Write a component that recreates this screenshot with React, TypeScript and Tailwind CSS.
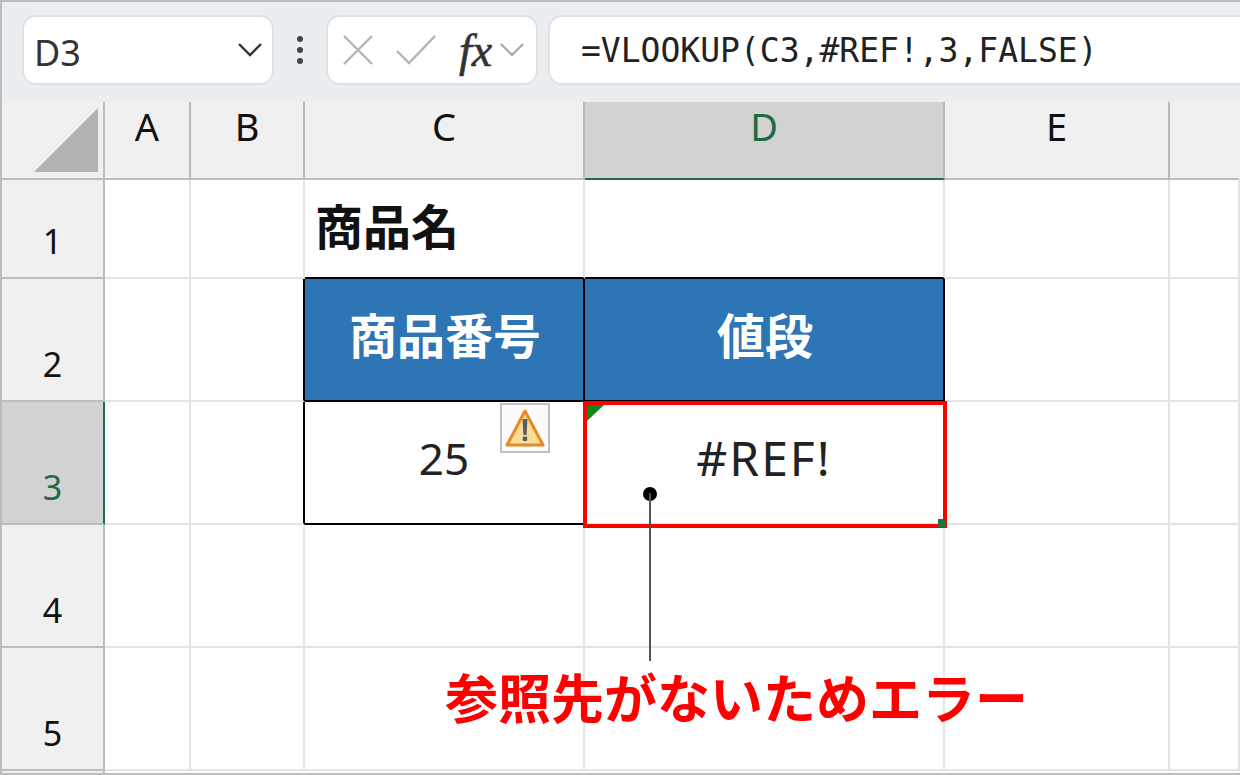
import React from 'react';

const headerFont = "font-['Noto_Sans','Noto_Sans_CJK_JP',sans-serif]";

const columns = [
  { label: 'A', line: 'border-[#b9b9b9]' },
  { label: 'B', line: 'border-[#b9b9b9]' },
  { label: 'C', line: 'border-[#b9b9b9]' },
  { label: 'D', line: 'border-[#b9b9b9]', active: true },
  { label: 'E', line: 'border-[#b9b9b9]' },
  { label: '', line: 'border-transparent' },
];

const Cell: React.FC<{ className?: string; children?: React.ReactNode }> = ({ className = '', children }) => (
  <div className={`flex items-center justify-center border-r-2 border-b-2 border-[#e4e4e4] ${className}`}>{children}</div>
);

const RowHead: React.FC<{ n: number; active?: boolean }> = ({ n, active }) => (
  <div
    className={`flex items-end justify-center pb-[14px] border-b-2 border-r-2 text-[34px] leading-[44px] ${
      active ? 'bg-[#d2d2d2] text-[#1e6b41] border-r-[#1e7145] border-b-[#bdbdbd]' : 'bg-[#f0f0f0] text-[#111] border-[#bdbdbd]'
    }`}
  >
    {n}
  </div>
);

const Warning = () => (
  <div className="absolute left-[195px] top-[1px] w-[50px] h-[50px] border-2 border-[#c0c0c0] bg-[#fbfbfb] flex items-center justify-center">
    <svg width="42" height="42" viewBox="0 0 42 42">
      <path d="M21 4 L39 38 H3 Z" fill="#f9dc95" stroke="#e68a26" strokeWidth="3" strokeLinejoin="round" />
      <path d="M18.6 12 H23.4 L22.6 28 H19.4 Z" fill="#5c5c5c" />
      <rect x="18.8" y="29.5" width="4.4" height="4.4" rx="1" fill="#5c5c5c" />
    </svg>
  </div>
);

const App: React.FC = () => {
  return (
    <div className={`relative w-[1240px] h-[775px] overflow-hidden bg-white border-2 border-r-0 border-[#bcbcbc] ${headerFont}`}>
      {/* formula bar */}
      <div className="h-[100px] bg-[#ebeef1] flex items-center pl-[20px] pb-[5px]">
        <div className="w-[252px] h-[70px] bg-white border-2 border-[#dfe1e4] rounded-[14px] flex items-center justify-between pl-[10px] pr-[8px]">
          <span className="text-[36px] text-[#333] leading-none mt-[6px]">D3</span>
          <svg width="28" height="16" viewBox="0 0 28 16" fill="none" stroke="#333" strokeWidth="2.4">
            <path d="M3 2 L14 13 L25 2" />
          </svg>
        </div>
        <div className="w-[52px] flex flex-col items-center gap-[5px]">
          <span className="w-[6px] h-[6px] rounded-full bg-[#444]" />
          <span className="w-[6px] h-[6px] rounded-full bg-[#444]" />
          <span className="w-[6px] h-[6px] rounded-full bg-[#444]" />
        </div>
        <div className="w-[212px] h-[70px] bg-white border-2 border-[#dfe1e4] rounded-[14px] flex items-center pl-[13px]">
          <svg width="34" height="34" viewBox="0 0 34 34" fill="none" stroke="#b4b4b4" strokeWidth="2.4">
            <path d="M3 3 L31 31 M31 3 L3 31" />
          </svg>
          <svg width="42" height="32" viewBox="0 0 42 32" fill="none" stroke="#b4b4b4" strokeWidth="2.4" className="ml-[20px]">
            <path d="M2 17 L14 29 L40 2" />
          </svg>
          <span className="ml-[22px] mt-[2px] w-[37px] text-[46px] leading-none italic text-[#333] font-['Liberation_Serif',serif] [-webkit-text-stroke:0.6px_#333]">fx</span>
          <svg width="26" height="15" viewBox="0 0 26 15" fill="none" stroke="#a8a8a8" strokeWidth="2.2" className="ml-[3px]">
            <path d="M2 2 L13 13 L24 2" />
          </svg>
        </div>
        <div className="ml-[10px] flex-1 h-[70px] bg-white border-2 border-r-0 border-[#dfe1e4] rounded-l-[14px] flex items-center pl-[31px]">
          <span className="font-['DejaVu_Sans_Mono',monospace] text-[33px] text-[#222] leading-none whitespace-pre mt-[2px]">=VLOOKUP(C3,#REF!,3,FALSE)</span>
        </div>
      </div>

      {/* sheet */}
      <div className="relative grid grid-cols-[103px_86px_114px_280px_360px_225px_1fr] grid-rows-[78px_99px_123px_123px_123px_123px_10px]">
        {/* column headers */}
        <div className="bg-[#f0f0f0] border-r-2 border-b-2 border-[#bdbdbd] flex items-end justify-end pr-[3px] pb-[4px]">
          <svg width="68" height="68" viewBox="0 0 68 68">
            <path d="M66 2 V66 H2 Z" fill="#b2b2b2" />
          </svg>
        </div>
        {columns.map((c) => (
          <div
            key={c.label || 'rest'}
            className={`flex justify-center pt-[1px] text-[38px] leading-[46px] border-r-2 border-b-2 ${c.line} ${
              c.active ? 'bg-[#d2d2d2] text-[#1e6b41] border-b-[#1e7145]' : 'bg-[#f0f0f0] text-[#111] border-b-[#bdbdbd]'
            }`}
          >
            {c.label}
          </div>
        ))}

        {/* row 1 */}
        <RowHead n={1} />
        <Cell />
        <Cell />
        <Cell className="justify-start! pl-[10px] pb-[9px] text-[48px] font-bold text-[#111] font-['Noto_Sans_CJK_JP',sans-serif] border-b-black">商品名</Cell>
        <Cell className="border-b-black" />
        <Cell />
        <Cell className="border-r-0" />

        {/* row 2 */}
        <RowHead n={2} />
        <Cell />
        <Cell className="border-r-black" />
        <Cell className="bg-[#2e75b6] border-r-black border-b-black text-white text-[48px] font-bold font-['Noto_Sans_CJK_JP',sans-serif] pb-[14px] pl-[2px]">商品番号</Cell>
        <Cell className="bg-[#2e75b6] border-r-black border-b-black text-white text-[48px] font-bold font-['Noto_Sans_CJK_JP',sans-serif] pb-[14px] pl-[2px]">値段</Cell>
        <Cell />
        <Cell className="border-r-0" />

        {/* row 3 */}
        <RowHead n={3} active />
        <Cell />
        <Cell className="border-r-black" />
        <Cell className="relative border-r-black border-b-black text-[44px] text-[#222] pb-[10px]">
          25
          <Warning />
        </Cell>
        <Cell className="relative text-[48px] tracking-[2px] text-[#222] pb-[10px]">
          #REF!
          {/* selected cell */}
          <div className="absolute -left-[2px] -top-[1px] w-[364px] h-[127px] border-[4px] border-[#ff0000]">
            <svg width="18" height="18" viewBox="0 0 18 18" className="absolute left-0 top-0">
              <path d="M0 0 H17 L0 16 Z" fill="#0b8a16" />
            </svg>
            <div className="absolute -right-[3px] -bottom-[3px] w-[8px] h-[8px] bg-[#1e7145]" />
          </div>
        </Cell>
        <Cell />
        <Cell className="border-r-0" />

        {/* row 4 */}
        <RowHead n={4} />
        <Cell />
        <Cell />
        <Cell />
        <Cell />
        <Cell />
        <Cell className="border-r-0" />

        {/* row 5 */}
        <RowHead n={5} />
        <Cell />
        <Cell />
        <Cell />
        <Cell />
        <Cell />
        <Cell className="border-r-0" />

        <div className="bg-[#f0f0f0] border-r-2 border-[#bdbdbd]" />

        {/* callout */}
        <div className="absolute left-[641px] top-[385px] w-[14px] h-[14px] rounded-full bg-black" />
        <div className="absolute left-[647px] top-[391px] w-[2px] h-[168px] bg-[#555]" />
        <div className="absolute left-[443px] top-[559px] text-[53px] leading-[70px] font-bold text-[#ff0000] whitespace-nowrap font-['Noto_Sans_CJK_JP',sans-serif]">
          参照先がないためエラー
        </div>
      </div>
    </div>
  );
};

export default App;
